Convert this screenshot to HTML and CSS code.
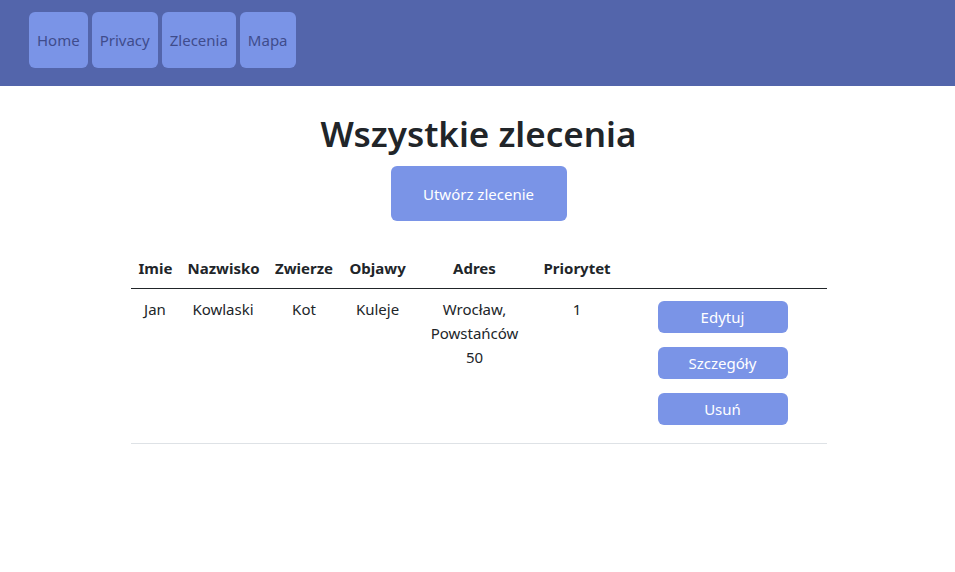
FILE: index.html
```html
<!DOCTYPE html>
<html lang="pl">
<head>
<meta charset="utf-8">
<title>Wszystkie zlecenia</title>
<link rel="stylesheet" href="styles.css">
</head>
<body>
<header class="topbar">
  <nav class="nav">
    <a class="nav-btn" href="#">Home</a>
    <a class="nav-btn" href="#">Privacy</a>
    <a class="nav-btn" href="#">Zlecenia</a>
    <a class="nav-btn" href="#">Mapa</a>
  </nav>
</header>
<main class="container">
  <h1 class="title">Wszystkie zlecenia</h1>
  <div class="create-wrap"><a class="btn btn-create" href="#">Utwórz zlecenie</a></div>
  <table class="table">
    <colgroup>
      <col class="c1"><col class="c2"><col class="c3"><col class="c4"><col class="c5"><col class="c6"><col class="c7">
    </colgroup>
    <thead>
      <tr><th>Imie</th><th>Nazwisko</th><th>Zwierze</th><th>Objawy</th><th>Adres</th><th>Priorytet</th><th></th></tr>
    </thead>
    <tbody>
      <tr>
        <td>Jan</td><td>Kowlaski</td><td>Kot</td><td>Kuleje</td><td>Wrocław, Powstańców 50</td><td>1</td>
        <td>
          <div class="actions">
            <a class="btn btn-sm" href="#">Edytuj</a>
            <a class="btn btn-sm" href="#">Szczegóły</a>
            <a class="btn btn-sm" href="#">Usuń</a>
          </div>
        </td>
      </tr>
    </tbody>
  </table>
</main>
</body>
</html>
```
FILE: styles.css
```css
* { box-sizing: border-box; }
body {
  margin: 0;
  font-family: "Noto Sans", "Open Sans", sans-serif;
  font-size: 16px;
  line-height: 24px;
  color: #212529;
  background: #fff;
}
a { text-decoration: none; }
.topbar {
  background: #5365ab;
  height: 86px;
  padding: 12px 29px;
}
.nav { display: flex; gap: 4px; }
.nav-btn {
  display: flex;
  align-items: center;
  height: 56px;
  padding: 0 8px;
  background: #7a94e7;
  color: #3f4c8c;
  border-radius: 6px;
  font-size: 15px;
}
.container {
  width: 696px;
  margin-left: calc(50% - 347px);
}
.title {
  margin: 24px 0 8px;
  text-align: center;
  font-size: 35px;
  font-weight: 600;
  line-height: 48px;
}
.create-wrap { display: flex; justify-content: center; }
.btn {
  display: inline-flex;
  align-items: center;
  justify-content: center;
  background: #7a94e7;
  color: #fff;
  border-radius: 6px;
}
.btn-create { width: 176px; height: 55px; font-size: 15px; }
.table {
  width: 696px;
  margin-top: 27px;
  border-collapse: collapse;
  table-layout: fixed;
}
.c1 { width: 49px; } .c2 { width: 87px; } .c3 { width: 75px; } .c4 { width: 72px; }
.c5 { width: 122px; } .c6 { width: 83px; } .c7 { width: 208px; }
.table th, .table td {
  padding: 8px;
  text-align: center;
  vertical-align: top;
  font-size: 15px;
}
.table th { font-weight: 700; border-bottom: 1px solid #212529; }
.table td { border-bottom: 1px solid #dee2e6; }
.actions {
  display: flex;
  flex-direction: column;
  align-items: center;
  gap: 14px;
  padding: 4px 0 10px;
}
.btn-sm { width: 130px; height: 32px; }
```
